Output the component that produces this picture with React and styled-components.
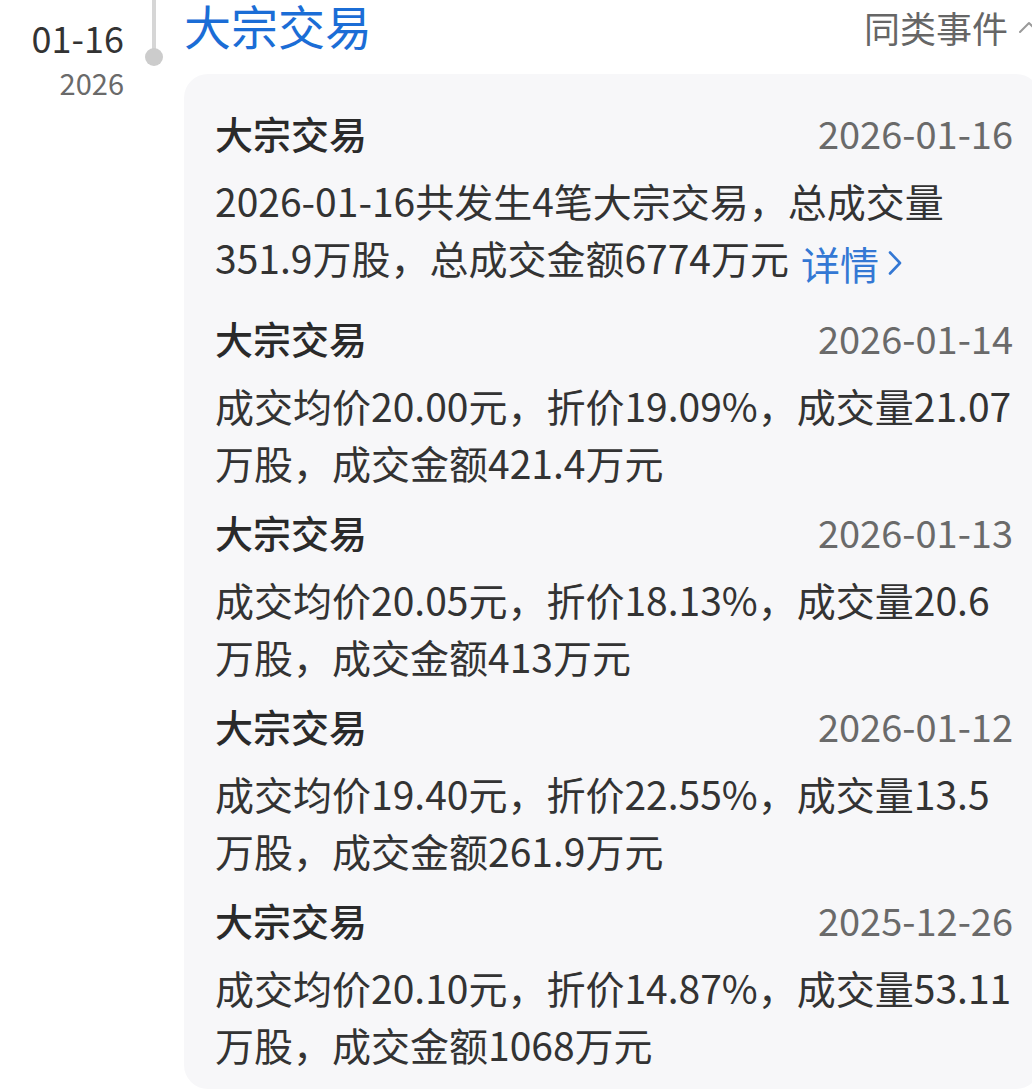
import React from "react"
import styled, { createGlobalStyle } from "styled-components"

const GlobalStyle = createGlobalStyle`
    html, body {
        margin: 0;
        padding: 0;
        background: #ffffff;
        overflow: hidden;
    }
    body {
        font-family: "Noto Sans CJK SC", "Noto Sans", sans-serif;
    }
`

const deals = [
    {
        date: "2026-01-16",
        lines: ["2026-01-16共发生4笔大宗交易，总成交量", "351.9万股，总成交金额6774万元"],
        link: true,
    },
    {
        date: "2026-01-14",
        lines: ["成交均价20.00元，折价19.09%，成交量21.07", "万股，成交金额421.4万元"],
    },
    {
        date: "2026-01-13",
        lines: ["成交均价20.05元，折价18.13%，成交量20.6", "万股，成交金额413万元"],
    },
    {
        date: "2026-01-12",
        lines: ["成交均价19.40元，折价22.55%，成交量13.5", "万股，成交金额261.9万元"],
    },
    {
        date: "2025-12-26",
        lines: ["成交均价20.10元，折价14.87%，成交量53.11", "万股，成交金额1068万元"],
    },
]

const ChevronUp = () => (
    <svg width="22" height="14" viewBox="0 0 22 14" fill="none">
        <path d="M2 12 L11 3 L20 12" stroke="#9a9a9a" strokeWidth="2" strokeLinecap="round" strokeLinejoin="round" />
    </svg>
)

const ChevronRight = () => (
    <svg width="16" height="26" viewBox="0 0 16 26" fill="none">
        <path d="M3 2.5 L13 13 L3 23.5" stroke="#3478d4" strokeWidth="2.6" strokeLinecap="round" strokeLinejoin="round" />
    </svg>
)

export default function App() {
    return (
        <Page>
            <GlobalStyle />
            <DateCol>
                <Day>01-16</Day>
                <Year>2026</Year>
            </DateCol>
            <Rail>
                <RailLine />
                <RailDot />
            </Rail>
            <Content>
                <Header>
                    <Title>大宗交易</Title>
                    <Similar>
                        同类事件
                        <ChevronUp />
                    </Similar>
                </Header>
                <Card>
                    {deals.map((deal) => (
                        <Item key={deal.date}>
                            <ItemHead>
                                <ItemTitle>大宗交易</ItemTitle>
                                <ItemDate>{deal.date}</ItemDate>
                            </ItemHead>
                            <Body>
                                {deal.lines.map((line, i) => (
                                    <Line key={i}>
                                        {line}
                                        {deal.link && i === deal.lines.length - 1 && (
                                            <Detail>
                                                详情
                                                <ChevronRight />
                                            </Detail>
                                        )}
                                    </Line>
                                ))}
                            </Body>
                        </Item>
                    ))}
                </Card>
            </Content>
        </Page>
    )
}

const Page = styled.div`
    display: flex;
    align-items: flex-start;
    width: 1040px;
`

const DateCol = styled.div`
    width: 124px;
    flex: none;
    padding-top: 16px;
    text-align: right;
`

const Day = styled.div`
    font-size: 36px;
    line-height: 42px;
    color: #333333;
`

const Year = styled.div`
    margin-top: 4px;
    font-size: 29px;
    line-height: 40px;
    color: #6a6a6a;
`

const Rail = styled.div`
    width: 60px;
    flex: none;
    display: flex;
    flex-direction: column;
    align-items: center;
`

const RailLine = styled.div`
    width: 4px;
    height: 50px;
    background: #d6d6d6;
`

const RailDot = styled.div`
    width: 18px;
    height: 18px;
    margin-top: -2px;
    border-radius: 50%;
    background: #cccccc;
`

const Content = styled.div`
    flex: 1;
    min-width: 0;
`

const Header = styled.div`
    display: flex;
    align-items: center;
    justify-content: space-between;
    height: 50px;
`

const Title = styled.div`
    font-size: 47px;
    line-height: 50px;
    color: #1b6dd6;
`

const Similar = styled.div`
    display: flex;
    align-items: center;
    gap: 10px;
    margin-top: 4px;
    font-size: 36px;
    line-height: 44px;
    color: #666666;
`

const Card = styled.div`
    margin-top: 24px;
    padding: 30px 27px 16px 31px;
    border-radius: 24px;
    background: #f7f7f9;
    display: flex;
    flex-direction: column;
    gap: 12px;
`

const Item = styled.div`
    display: flex;
    flex-direction: column;
    gap: 11px;
`

const ItemHead = styled.div`
    display: flex;
    align-items: center;
    justify-content: space-between;
`

const ItemTitle = styled.div`
    font-size: 38px;
    line-height: 57px;
    font-weight: 500;
    color: #2a2a2a;
`

const ItemDate = styled.div`
    font-size: 38px;
    line-height: 57px;
    color: #6a6a6a;
`

const Body = styled.div``

const Line = styled.div`
    font-size: 39px;
    line-height: 57px;
    color: #333333;
    white-space: nowrap;
`

const Detail = styled.span`
    display: inline-flex;
    align-items: center;
    gap: 8px;
    margin-left: 12px;
    padding: 5.5px 0;
    vertical-align: middle;
    color: #3478d4;
`
